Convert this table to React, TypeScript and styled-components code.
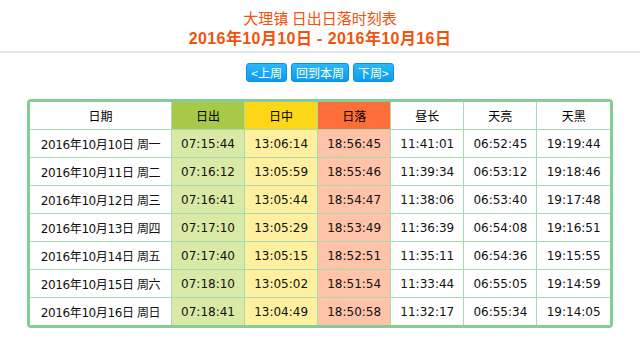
import React from 'react'
import styled, { createGlobalStyle } from 'styled-components'

const GlobalStyle = createGlobalStyle`
  html, body {
    margin: 0;
    padding: 0;
    background: #fff;
  }
  body {
    font-family: "DejaVu Sans", "Noto Sans CJK SC", sans-serif;
    font-size: 12px;
    color: #000;
  }
`

const Page = styled.div`
  width: 640px;
  height: 350px;
  overflow: hidden;
`

const Header = styled.header`
  text-align: center;
  color: #f2520c;
  padding-top: 7px;
  height: 44px;
  border-bottom: 2px solid #e4e4e4;
`

const Title = styled.h1`
  margin: 0;
  font-size: 15px;
  font-weight: normal;
  line-height: 21px;
  font-family: "Noto Sans CJK SC", sans-serif;
`

const Range = styled.h2`
  margin: 0;
  font-size: 16px;
  font-weight: bold;
  line-height: 22px;
  letter-spacing: 0.4px;
  font-family: "Liberation Sans", "Noto Sans CJK SC", sans-serif;
`

const Nav = styled.nav`
  display: flex;
  justify-content: center;
  gap: 4px;
  margin-top: 10px;
`

const NavButton = styled.button`
  height: 19px;
  padding: 0 4px;
  border: 1px solid #0a93e6;
  border-radius: 3px;
  background: linear-gradient(#2ab8fd, #0c9bef);
  color: #fff;
  font-family: "Noto Sans CJK SC", sans-serif;
  font-size: 12px;
  line-height: 17px;
  cursor: pointer;
`

const TableWrap = styled.div`
  margin: 17px auto 0;
  width: 580px;
  border: 3px solid #86cc97;
  border-radius: 4px;
  overflow: hidden;
`

const Table = styled.table`
  width: 100%;
  border-collapse: collapse;
  table-layout: fixed;
`

const headBg: Record<string, string> = {
  rise: '#a8c947',
  noon: '#fcd617',
  set: '#fe6e38',
  none: '#fff',
}

const cellBg: Record<string, string> = {
  rise: '#d9e9a6',
  noon: '#fff0a0',
  set: '#ffc3aa',
  none: '#fff',
}

type Tone = 'rise' | 'noon' | 'set' | 'none'

const Th = styled.th<{ $tone: Tone; $w?: number }>`
  height: 27px;
  padding: 0;
  font-weight: normal;
  font-family: "Noto Sans CJK SC", sans-serif;
  font-size: 12px;
  background: ${(p) => headBg[p.$tone]};
  border: 1px solid #a6dab2;
  border-top: none;
  width: ${(p) => (p.$w ? `${p.$w}px` : 'auto')};
  &:first-child { border-left: none; }
  &:last-child { border-right: none; }
`

const Td = styled.td<{ $tone: Tone }>`
  height: 27px;
  padding: 0;
  text-align: center;
  background: ${(p) => cellBg[p.$tone]};
  border: 1px solid #a6dab2;
  font-family: "DejaVu Sans", "Noto Sans CJK SC", sans-serif;
  font-size: 12px;
  color: #111;
  &:first-child { border-left: none; letter-spacing: -0.4px; }
  &:last-child { border-right: none; }
  tr:last-child & { border-bottom: none; }
`

const columns: { label: string; tone: Tone }[] = [
  { label: '日期', tone: 'none' },
  { label: '日出', tone: 'rise' },
  { label: '日中', tone: 'noon' },
  { label: '日落', tone: 'set' },
  { label: '昼长', tone: 'none' },
  { label: '天亮', tone: 'none' },
  { label: '天黑', tone: 'none' },
]

const rows = [
  ['2016年10月10日 周一', '07:15:44', '13:06:14', '18:56:45', '11:41:01', '06:52:45', '19:19:44'],
  ['2016年10月11日 周二', '07:16:12', '13:05:59', '18:55:46', '11:39:34', '06:53:12', '19:18:46'],
  ['2016年10月12日 周三', '07:16:41', '13:05:44', '18:54:47', '11:38:06', '06:53:40', '19:17:48'],
  ['2016年10月13日 周四', '07:17:10', '13:05:29', '18:53:49', '11:36:39', '06:54:08', '19:16:51'],
  ['2016年10月14日 周五', '07:17:40', '13:05:15', '18:52:51', '11:35:11', '06:54:36', '19:15:55'],
  ['2016年10月15日 周六', '07:18:10', '13:05:02', '18:51:54', '11:33:44', '06:55:05', '19:14:59'],
  ['2016年10月16日 周日', '07:18:41', '13:04:49', '18:50:58', '11:32:17', '06:55:34', '19:14:05'],
]

export default function App() {
  return (
    <Page>
      <GlobalStyle />
      <Header>
        <Title>大理镇 日出日落时刻表</Title>
        <Range>2016年10月10日 - 2016年10月16日</Range>
      </Header>
      <Nav>
        <NavButton>&lt;上周</NavButton>
        <NavButton>回到本周</NavButton>
        <NavButton>下周&gt;</NavButton>
      </Nav>
      <TableWrap>
        <Table>
          <thead>
            <tr>
              {columns.map((c, i) => (
                <Th key={c.label} $tone={c.tone} $w={i === 0 ? 141 : undefined}>
                  {c.label}
                </Th>
              ))}
            </tr>
          </thead>
          <tbody>
            {rows.map((r) => (
              <tr key={r[0]}>
                {r.map((v, i) => (
                  <Td key={i} $tone={columns[i].tone}>
                    {v}
                  </Td>
                ))}
              </tr>
            ))}
          </tbody>
        </Table>
      </TableWrap>
    </Page>
  )
}
